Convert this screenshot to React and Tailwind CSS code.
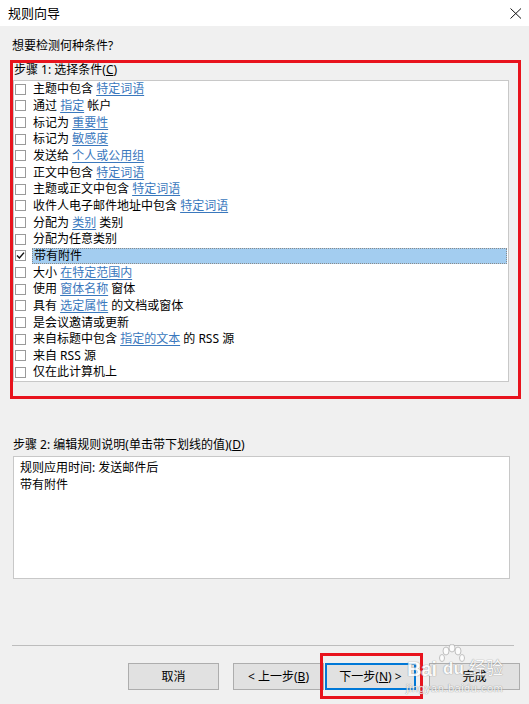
import React from 'react'

const FONT = { fontFamily: '"Noto Sans", "Noto Sans CJK SC", sans-serif' }

const CONDITIONS = [
  ['主题中包含 ', { link: '特定词语' }],
  ['通过 ', { link: '指定' }, ' 帐户'],
  ['标记为 ', { link: '重要性' }],
  ['标记为 ', { link: '敏感度' }],
  ['发送给 ', { link: '个人或公用组' }],
  ['正文中包含 ', { link: '特定词语' }],
  ['主题或正文中包含 ', { link: '特定词语' }],
  ['收件人电子邮件地址中包含 ', { link: '特定词语' }],
  ['分配为 ', { link: '类别' }, ' 类别'],
  ['分配为任意类别'],
  ['带有附件'],
  ['大小 ', { link: '在特定范围内' }],
  ['使用 ', { link: '窗体名称' }, ' 窗体'],
  ['具有 ', { link: '选定属性' }, ' 的文档或窗体'],
  ['是会议邀请或更新'],
  ['来自标题中包含 ', { link: '指定的文本' }, ' 的 RSS 源'],
  ['来自 RSS 源'],
  ['仅在此计算机上'],
]

const SELECTED = 10

function Checkbox({ checked }) {
  return (
    <span className="w-[11px] h-[11px] border border-[#9a9a9a] bg-white flex items-center justify-center shrink-0">
      {checked && (
        <svg width="9" height="9" viewBox="0 0 9 9">
          <path d="M1 4.6 L3.4 7 L8 1.6" fill="none" stroke="#111" strokeWidth="1.4" />
        </svg>
      )}
    </span>
  )
}

function ConditionRow({ parts, index }) {
  const selected = index === SELECTED
  return (
    <div className="flex items-center h-[16.666px]">
      <div className="w-[18px] pl-[1px] flex items-center">
        <Checkbox checked={selected} />
      </div>
      <div
        className={`flex-1 h-full flex items-center pl-[1px] whitespace-pre ${
          selected ? 'bg-[#a3cdf0] border border-dotted border-[#8a8a8a] mr-[1px]' : ''
        }`}
      >
        {parts.map((p, i) =>
          typeof p === 'string' ? (
            <span key={i}>{p}</span>
          ) : (
            <span key={i} className="text-[#3a78bd] underline underline-offset-2 decoration-[#3a78bd]">
              {p.link}
            </span>
          )
        )}
      </div>
    </div>
  )
}

function WizardButton({ children, primary }) {
  return (
    <button
      className={`w-[91px] h-[27px] bg-[#e1e1e1] text-[12px] text-black flex items-center justify-center border ${
        primary ? 'border-[#0078d7] shadow-[inset_0_0_0_1px_#0078d7]' : 'border-[#adadad]'
      }`}
    >
      {children}
    </button>
  )
}

export default function App() {
  return (
    <div className="w-[529px] h-[704px] bg-[#f0f0f0] text-black text-[12px] relative overflow-hidden" style={FONT}>
      {/* title bar */}
      <div className="h-[26px] bg-white flex items-center justify-between pl-[8px] pr-[6px]">
        <span className="text-[13px] leading-[16px]">规则向导</span>
        <svg width="12" height="11" viewBox="0 0 12 11" className="mr-[1px]">
          <path d="M0.5 0.5 L11 10.5 M11 0.5 L0.5 10.5" stroke="#111" strokeWidth="1" fill="none" />
        </svg>
      </div>

      <div className="pl-[12px] pt-[12px] leading-[16px]">想要检测何种条件?</div>

      {/* step 1 */}
      <div className="mt-[6px] ml-[10px] mr-[8px] border-[3px] border-[#e8131d] pb-[14px]">
        <div className="h-[17px] leading-[13px] pl-[1px]">
          步骤 1: 选择条件(<span className="underline">C</span>)
        </div>
        <div className="ml-0 mr-[9px] h-[302px] bg-white border border-[#c8c8c8]">
          {CONDITIONS.map((parts, i) => (
            <ConditionRow key={i} parts={parts} index={i} />
          ))}
        </div>
      </div>

      {/* step 2 */}
      <div className="mt-[38px] pl-[13px] leading-[16px]">
        步骤 2: 编辑规则说明(单击带下划线的值)(<span className="underline">D</span>)
      </div>
      <div className="mt-[3px] ml-[13px] w-[497px] h-[123px] bg-white border border-[#c8c8c8] pl-[6px] pt-[2px] leading-[17px]">
        <div>规则应用时间: 发送邮件后</div>
        <div>带有附件</div>
      </div>

      <div className="mt-[66px] ml-[12px] mr-[15px] h-px bg-[#bdbdbd]" />

      {/* buttons */}
      <div className="mt-[17px] flex pl-[128px]">
        <WizardButton>取消</WizardButton>
        <div className="w-[14px]" />
        <WizardButton>
          &lt; 上一步(<span className="underline">B</span>)
        </WizardButton>
        <div className="w-[1px]" />
        <div className="relative">
          <WizardButton primary>
            下一步(<span className="underline">N</span>) &gt;
          </WizardButton>
          <div className="absolute left-[-5px] right-[-7px] top-[-10px] bottom-[-9px] border-[3px] border-[#e8131d] pointer-events-none" />
        </div>
        <div className="w-[13px]" />
        <WizardButton>完成</WizardButton>
      </div>

      {/* watermark */}
      <div className="absolute left-[405px] top-[642px] w-[120px] h-[60px] pointer-events-none text-white [text-shadow:0_0_1px_#8a8a8a,0_0_1px_#8a8a8a] opacity-80">
        <svg className="absolute left-[34px] top-[2px]" width="26" height="22" viewBox="0 0 26 22">
          <g fill="#fff" stroke="#b5b5b5" strokeWidth="1">
            <ellipse cx="7" cy="7" rx="3" ry="4" />
            <ellipse cx="13" cy="4" rx="3" ry="4" />
            <ellipse cx="19" cy="7" rx="3" ry="4" />
            <ellipse cx="3" cy="14" rx="2.5" ry="3.5" />
            <ellipse cx="23" cy="14" rx="2.5" ry="3.5" />
          </g>
        </svg>
        <div className="absolute left-[2px] top-[16px] text-[20px] leading-[22px] font-bold tracking-tight" style={{ fontFamily: 'Arial, "Liberation Sans", sans-serif' }}>
          Bai
        </div>
        <div className="absolute left-[38px] top-[17px] text-[17px] leading-[20px] font-bold" style={{ fontFamily: 'Arial, "Liberation Sans", sans-serif' }}>
          du
        </div>
        <div className="absolute left-[64px] top-[16px] text-[17px] leading-[20px]">经验</div>
        <div className="absolute left-[1px] top-[40px] text-[11px] leading-[12px] tracking-[0.5px]" style={{ fontFamily: 'Arial, "Liberation Sans", sans-serif' }}>
          jingyan.baidu.com
        </div>
      </div>
    </div>
  )
}
